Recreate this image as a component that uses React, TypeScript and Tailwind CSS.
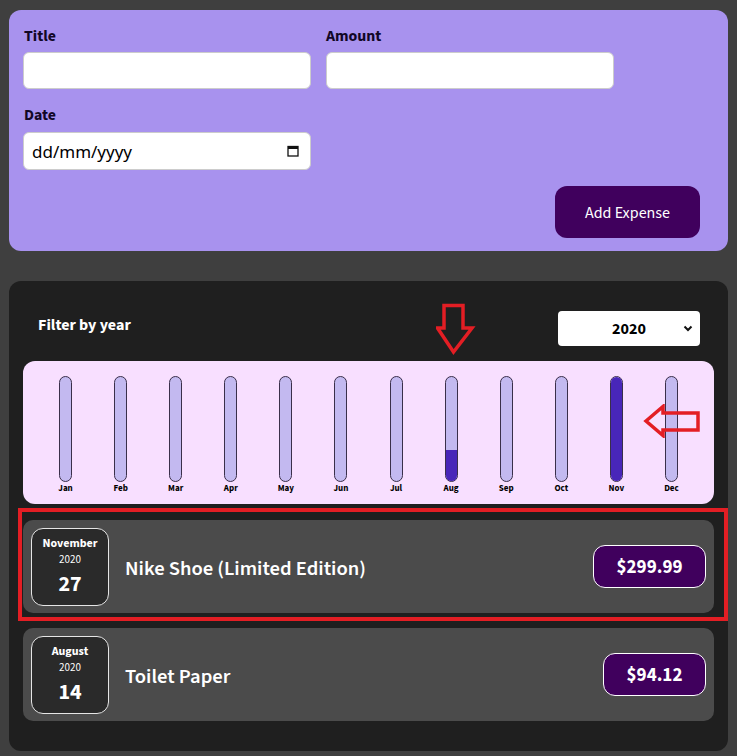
import React from "react";

const months = ["Jan","Feb","Mar","Apr","May","Jun","Jul","Aug","Sep","Oct","Nov","Dec"];
const fills: Record<string, number> = { Aug: 30, Nov: 100 };

function ExpenseItem({ month, year, day, title, price, priceW }: { month: string; year: string; day: string; title: string; price: string; priceW: string }) {
  return (
    <div className="flex items-center bg-[#4b4b4b] rounded-[10px] h-[93px] pl-[8px] pr-[8px]">
      <div className="w-[78px] h-[78px] rounded-[12px] border border-[#e5e5e5] bg-[#2a2a2a] text-white flex flex-col items-center justify-center">
        <div className="text-[12px] font-bold leading-[16px]">{month}</div>
        <div className="text-[11px] leading-[16px]">{year}</div>
        <div className="text-[22px] font-bold leading-[26px] mt-[3px]">{day}</div>
      </div>
      <div className="ml-[16px] flex-1 text-white text-[20.6px] font-semibold pt-[5px]">{title}</div>
      <div className={`${priceW} h-[43px] rounded-[12px] border border-white bg-[#40005d] text-white text-[19px] font-bold flex items-center justify-center pt-[4px]`}>{price}</div>
    </div>
  );
}

export default function App() {
  return (
    <div className="min-h-[756px] bg-[#3f3f3f] pt-[10px] px-[9px] pb-[6px] font-['Source_Sans_3','Lato',sans-serif] relative">
      {/* Form */}
      <div className="bg-[#a892ee] rounded-[12px] px-[14px] pt-[16px] pb-[13px]">
        <div className="grid grid-cols-[288px_288px] gap-x-[15px] gap-y-[16px]">
          <div>
            <div className="text-[15.8px] font-bold text-[#120726] leading-[20px] mb-[6px] pl-[1px]">Title</div>
            <div className="h-[37px] bg-white rounded-[6px] border border-[#ccc]"></div>
          </div>
          <div>
            <div className="text-[15.8px] font-bold text-[#120726] leading-[20px] mb-[6px]">Amount</div>
            <div className="h-[37px] bg-white rounded-[6px] border border-[#ccc]"></div>
          </div>
          <div>
            <div className="text-[15.8px] font-bold text-[#120726] leading-[20px] mb-[7px] pl-[1px]">Date</div>
            <div className="h-[38px] bg-white rounded-[6px] border border-[#ccc] flex items-center justify-between pl-[8px] pr-[11px]">
              <span className="text-[17px] text-black font-['Noto_Sans',sans-serif] leading-[20px] pt-[2px]">dd/mm/yyyy</span>
              <svg width="12" height="12" viewBox="0 0 12 12">
                <rect x="1" y="1.5" width="10" height="9.5" fill="none" stroke="#111" strokeWidth="1.3" />
                <rect x="1" y="1.5" width="10" height="2.5" fill="#111" />
              </svg>
            </div>
          </div>
        </div>
        <div className="flex justify-end mt-[16px] pr-[14px]">
          <button className="w-[145px] h-[52px] rounded-[12px] bg-[#40005d] text-white text-[16px] pt-[1px]">Add Expense</button>
        </div>
      </div>

      {/* Expenses */}
      <div className="mt-[30px] bg-[#1f1f1f] rounded-[12px] px-[14px] pt-[30px] pb-[30px]">
        <div className="flex items-center justify-between pl-[15px] pr-[14px]">
          <div className="text-white text-[16px] font-bold -mt-[8px]">Filter by year</div>
          <div className="relative w-[142px] h-[35px] bg-white rounded-[4px] flex items-center justify-center">
            <span className="text-[16px] font-bold text-black">2020</span>
            <svg className="absolute right-[7px] top-[14px]" width="10" height="7" viewBox="0 0 10 7">
              <path d="M1.5 1.5 L5 5 L8.5 1.5" fill="none" stroke="#111" strokeWidth="2" />
            </svg>
          </div>
        </div>

        <div className="mt-[15px] bg-[#f8dfff] rounded-[12px] h-[143px] px-[15px] pt-[15px] grid grid-cols-12">
          {months.map((m) => (
            <div key={m} className="flex flex-col items-center">
              <div className="w-[13px] h-[106px] rounded-[7px] border border-[#3a2f4a] bg-[#c3b9f0] overflow-hidden flex flex-col justify-end">
                {fills[m] ? (
                  <div className={`bg-[#4826b9] w-full ${m === "Aug" ? "h-[30%]" : "h-full"}`}></div>
                ) : null}
              </div>
              <div className="text-[9px] font-bold text-black leading-[12px] mt-[1px]">{m}</div>
            </div>
          ))}
        </div>

        <div className="mt-[16px] flex flex-col gap-[15px]">
          <ExpenseItem month="November" year="2020" day="27" title="Nike Shoe (Limited Edition)" price="$299.99" priceW="w-[113px]" />
          <ExpenseItem month="August" year="2020" day="14" title="Toilet Paper" price="$94.12" priceW="w-[103px]" />
        </div>
      </div>

      {/* Annotations */}
      <svg className="absolute left-[436px] top-[303px]" width="40" height="54" viewBox="0 0 40 54">
        <path d="M8 2.5 H27 V25 H36 L17.5 49 L1.5 25 H8 Z" fill="none" stroke="#e31e24" strokeWidth="3.5" strokeLinejoin="miter" />
      </svg>
      <svg className="absolute left-[643px] top-[404px]" width="60" height="34" viewBox="0 0 60 34">
        <path d="M3 17 L20 2.5 V9 H55 V26 H20 V31.5 Z" fill="none" stroke="#e31e24" strokeWidth="3.5" />
      </svg>
      <div className="absolute left-[18px] top-[508px] w-[710px] h-[113px] border-[4px] border-[#e31e24] pointer-events-none"></div>
    </div>
  );
}
